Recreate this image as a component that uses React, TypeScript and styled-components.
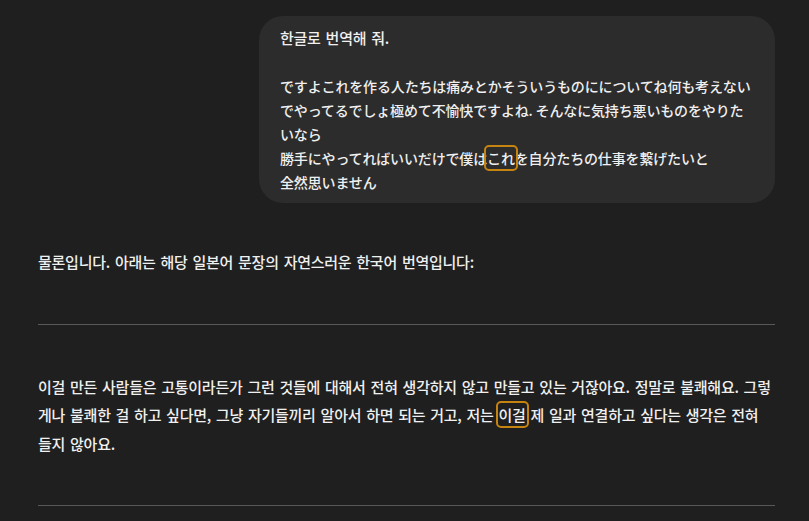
import React from "react";
import styled, { createGlobalStyle } from "styled-components";

const Global = createGlobalStyle`
  html, body { margin: 0; padding: 0; background: #1f1f1f; }
  body {
    font-family: "Noto Sans CJK KR", "Noto Sans CJK JP", "Noto Sans", sans-serif;
    color: #f0f0f0;
  }
`;

const Page = styled.div`
  width: 809px;
  height: 521px;
  overflow: hidden;
  box-sizing: border-box;
  padding: 16px 34px 0 38px;
  display: flex;
  flex-direction: column;
`;

const UserRow = styled.div`
  display: flex;
  justify-content: flex-end;
`;

const Bubble = styled.div`
  width: 516px;
  box-sizing: border-box;
  background: #2c2c2c;
  border-radius: 24px;
  padding: 10px 24px 9px 21px;
  line-height: 24px;
`;

const Line = styled.div<{ $jp?: boolean }>`
  min-height: 24px;
  font-weight: 500;
  font-size: ${(p) => (p.$jp ? "14px" : "15px")};
  letter-spacing: ${(p) => (p.$jp ? "-0.15px" : "-0.25px")};
  word-spacing: ${(p) => (p.$jp ? "0" : "1.8px")};
  font-family: ${(p) =>
    p.$jp
      ? `"Noto Sans CJK JP", "Noto Sans CJK KR", sans-serif`
      : `"Noto Sans CJK KR", sans-serif`};
`;

const Reply = styled.div`
  margin-top: 45px;
  display: flex;
  flex-direction: column;
`;

const Para = styled.p`
  margin: 0;
  font-size: 15px;
  font-weight: 500;
  line-height: 28.5px;
  letter-spacing: -0.25px;
  word-spacing: 1.8px;
`;

const Rule = styled.hr`
  border: none;
  height: 1px;
  background: #585858;
  margin: 47px 0 48px;
  width: 100%;
`;

const Mark = styled.span`
  outline: 2.5px solid #c5830f;
  outline-offset: 1px;
  border-radius: 2px;
`;

export default function App() {
  return (
    <>
      <Global />
      <Page>
        <UserRow>
          <Bubble>
            <Line>한글로 번역해 줘.</Line>
            <Line />
            <Line $jp>
              ですよこれを作る人たちは痛みとかそういうものにについてね何も考えないでやってるでしょ極めて不愉快ですよね. そんなに気持ち悪いものをやりたいなら
            </Line>
            <Line $jp>
              勝手にやってればいいだけで僕は<Mark>これ</Mark>を自分たちの仕事を繋げたいと
            </Line>
            <Line $jp>全然思いません</Line>
          </Bubble>
        </UserRow>
        <Reply>
          <Para>물론입니다. 아래는 해당 일본어 문장의 자연스러운 한국어 번역입니다:</Para>
          <Rule />
          <Para>
            이걸 만든 사람들은 고통이라든가 그런 것들에 대해서 전혀 생각하지 않고 만들고 있는 거잖아요. 정말로 불쾌해요. 그렇게나 불쾌한 걸 하고 싶다면, 그냥 자기들끼리 알아서 하면 되는 거고, 저는 <Mark>이걸</Mark> 제 일과 연결하고 싶다는 생각은 전혀 들지 않아요.
          </Para>
          <Rule />
        </Reply>
      </Page>
    </>
  );
}
